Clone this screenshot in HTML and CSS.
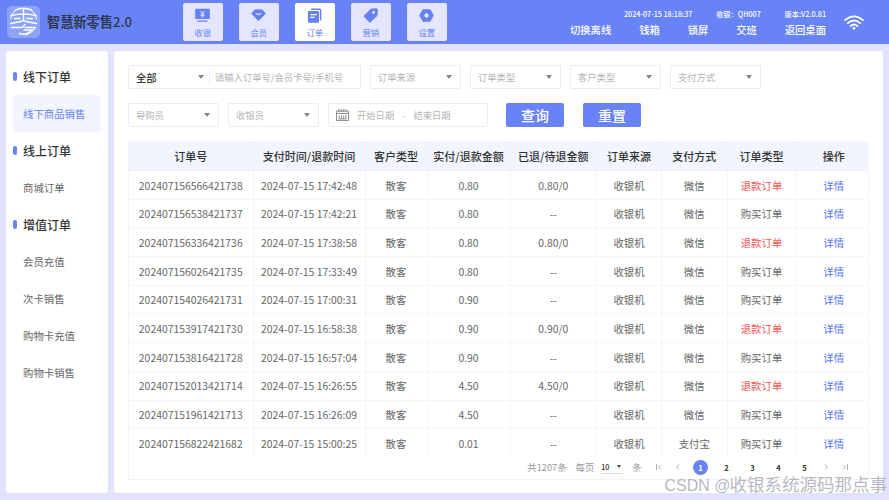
FILE: index.html
```html
<!DOCTYPE html>
<html lang="zh-CN">
<head>
    <meta charset="UTF-8">
    <meta name="viewport" content="width=device-width, initial-scale=1.0">
    <title>智慧新零售2.0</title>
    <link rel="stylesheet" href="styles.css">
</head>
<body>
    <header class="header">
        <svg class="logo" viewBox="0 0 33 32">
            <rect width="33" height="32" rx="5" fill="#8ea4f8"/>
            <g fill="none" stroke="#fff" stroke-width="1.4" stroke-linecap="round">
                <path d="M8.500 4Q16.500 .5 24.500 4M4 9.500Q16.500 6.500 29 9.500M16.500 2.500V14M7.500 12.500H13M20 12.500H25.500M3.500 17.500L14 15.500Q16.500 14 19 15.500L29.500 17.500M4.500 21.500H15L18 18.500M18 21.500H28.500M12.500 27.500Q18 29.500 22.500 26L25 24H17"/>
                <path d="M8.500 4A14 14 0 0 0 3.500 13M24.500 4A14 14 0 0 1 29.500 13M28.500 21.500Q25 28 18 29" stroke-width="1"/>
            </g>
        </svg>
        <h1 class="title">智慧新零售<span>2.0</span></h1>

        <nav class="nav">
            <a class="nav-item">
                <svg viewBox="0 0 16 16"><path fill="#6681f4" d="M1 .8h14a.8.8 0 0 1 .8.8v9.400a.8.8 0 0 1-.8.8H1a.8.8 0 0 1-.8-.8V1.600a.8.8 0 0 1 .8-.8zM2.500 13.300h11v1.400h-11z"/><path d="M5.800 3l2.200 2.500 2.200-2.500M8 5.500v4.800M5.800 6.200h4.400M5.800 8.200h4.400" fill="none" stroke="#e3e6fe"/></svg>
                <span>收银</span>
            </a>
            <a class="nav-item">
                <svg viewBox="0 0 16 16"><path fill="#6681f4" stroke="#6681f4" stroke-linejoin="round" d="M4 2h8l3.300 4L8 13.500.7 6z"/><path d="M5.500 6Q8 8 10.500 6" fill="none" stroke="#e3e6fe" stroke-width="1.300" stroke-linecap="round"/></svg>
                <span>会员</span>
            </a>
            <a class="nav-item active">
                <svg viewBox="0 0 16 16"><path d="M4.500 1.200h9a1 1 0 0 1 1 1v11" fill="none" stroke="#6681f4" stroke-width="1.600"/><rect x="1" y="3.300" width="11.800" height="12.300" rx="1.300" fill="#6681f4"/><path d="M3.500 7h7M3.500 10h4.500" stroke="#fff" stroke-width="1.400"/></svg>
                <span>订单</span>
            </a>
            <a class="nav-item">
                <svg viewBox="0 0 16 16"><path fill="#6681f4" stroke="#6681f4" stroke-width="1.300" stroke-linejoin="round" d="M8.500 1.500l5.500-.7 1.200 1.200-.5 6L7.300 15 1.300 8.700z"/><circle cx="11.300" cy="4.700" r="1.500" fill="#e3e6fe"/></svg>
                <span>营销</span>
            </a>
            <a class="nav-item">
                <svg viewBox="0 0 16 16"><path fill="#6681f4" stroke="#6681f4" stroke-width="1.500" stroke-linejoin="round" d="M4.500 2h7l3.500 6-3.500 6h-7L1 8z"/><circle cx="8" cy="8" r="2.300" fill="#e3e6fe"/></svg>
                <span>设置</span>
            </a>
        </nav>

        <div class="status">
            <div class="status-info">
                <span>2024-07-15 18:18:37</span>
                <span>收银：QH007</span>
                <span>版本:V2.0.81</span>
            </div>
            <div class="status-links">
                <a>切换离线</a>
                <a>钱箱</a>
                <a>锁屏</a>
                <a>交班</a>
                <a>返回桌面</a>
            </div>
        </div>
        <svg class="wifi" viewBox="0 0 20 15">
            <g fill="none" stroke="#fff" stroke-width="1.700" stroke-linecap="round">
                <path d="M1 5.200Q10-2.600 19 5.200M3.800 8.200Q10 2.800 16.200 8.200M6.600 11Q10 8 13.400 11"/>
            </g>
            <circle cx="10" cy="13.300" r="1.400" fill="#fff"/>
        </svg>
    </header>

    <div class="layout">
        <aside class="sidebar">
            <div class="side-title">线下订单</div>
            <a class="side-item active">线下商品销售</a>
            <div class="side-title">线上订单</div>
            <a class="side-item">商城订单</a>
            <div class="side-title">增值订单</div>
            <a class="side-item">会员充值</a>
            <a class="side-item">次卡销售</a>
            <a class="side-item">购物卡充值</a>
            <a class="side-item">购物卡销售</a>
        </aside>

        <main class="main">
            <div class="filters">
                <div class="search">
                    <div class="search-type">全部<i class="caret"></i></div>
                    <div class="search-text">请输入订单号/会员卡号/手机号</div>
                </div>
                <div class="select">订单来源<i class="caret"></i></div>
                <div class="select">订单类型<i class="caret"></i></div>
                <div class="select">客户类型<i class="caret"></i></div>
                <div class="select">支付方式<i class="caret"></i></div>
            </div>
            <div class="filters">
                <div class="select">导购员<i class="caret"></i></div>
                <div class="select">收银员<i class="caret"></i></div>
                <div class="date-range">
                    <svg viewBox="0 0 13 12"><path d="M.5 2h12v9.500H.5zM.5 4.500h12M3 0v3M5.300 0v3M7.700 0v3M10 0v3M3.200 6.500v3.500M5.400 6v4M7.600 6.500v3.500M9.800 6v4M2.500 10h8" fill="none" stroke="#858585" stroke-width=".9"/></svg>
                    <span>开始日期</span><span>-</span><span>结束日期</span>
                </div>
                <button class="btn btn-query">查询</button>
                <button class="btn">重置</button>
            </div>

            <div class="table-box">
                <table class="table">
                    <colgroup>
                        <col class="c-no"><col class="c-time"><col class="c-customer"><col class="c-paid"><col class="c-back"><col class="c-source"><col class="c-pay"><col class="c-type"><col class="c-op">
                    </colgroup>
                    <thead>
                        <tr><th>订单号</th><th>支付时间/退款时间</th><th>客户类型</th><th>实付/退款金额</th><th>已退/待退金额</th><th>订单来源</th><th>支付方式</th><th>订单类型</th><th>操作</th></tr>
                    </thead>
                    <tbody>
                        <tr><td>202407156566421738</td><td>2024-07-15 17:42:48</td><td>散客</td><td>0.80</td><td>0.80/0</td><td>收银机</td><td>微信</td><td class="refund">退款订单</td><td class="link">详情</td></tr>
                        <tr><td>202407156538421737</td><td>2024-07-15 17:42:21</td><td>散客</td><td>0.80</td><td>--</td><td>收银机</td><td>微信</td><td>购买订单</td><td class="link">详情</td></tr>
                        <tr><td>202407156336421736</td><td>2024-07-15 17:38:58</td><td>散客</td><td>0.80</td><td>0.80/0</td><td>收银机</td><td>微信</td><td class="refund">退款订单</td><td class="link">详情</td></tr>
                        <tr><td>202407156026421735</td><td>2024-07-15 17:33:49</td><td>散客</td><td>0.80</td><td>--</td><td>收银机</td><td>微信</td><td>购买订单</td><td class="link">详情</td></tr>
                        <tr><td>202407154026421731</td><td>2024-07-15 17:00:31</td><td>散客</td><td>0.90</td><td>--</td><td>收银机</td><td>微信</td><td>购买订单</td><td class="link">详情</td></tr>
                        <tr><td>202407153917421730</td><td>2024-07-15 16:58:38</td><td>散客</td><td>0.90</td><td>0.90/0</td><td>收银机</td><td>微信</td><td class="refund">退款订单</td><td class="link">详情</td></tr>
                        <tr><td>202407153816421728</td><td>2024-07-15 16:57:04</td><td>散客</td><td>0.90</td><td>--</td><td>收银机</td><td>微信</td><td>购买订单</td><td class="link">详情</td></tr>
                        <tr><td>202407152013421714</td><td>2024-07-15 16:26:55</td><td>散客</td><td>4.50</td><td>4.50/0</td><td>收银机</td><td>微信</td><td class="refund">退款订单</td><td class="link">详情</td></tr>
                        <tr><td>202407151961421713</td><td>2024-07-15 16:26:09</td><td>散客</td><td>4.50</td><td>--</td><td>收银机</td><td>微信</td><td>购买订单</td><td class="link">详情</td></tr>
                        <tr><td>202407156822421682</td><td>2024-07-15 15:00:25</td><td>散客</td><td>0.01</td><td>--</td><td>收银机</td><td>支付宝</td><td>购买订单</td><td class="link">详情</td></tr>
                    </tbody>
                </table>

                <div class="pager">
                    <span class="total">共1207条</span>
                    <span>每页</span>
                    <span class="page-size">10<i class="caret"></i></span>
                    <span class="unit">条</span>
                    <svg class="arrow" viewBox="0 0 8 8"><path d="M1.500 1v6M6 1.500L3.500 4 6 6.500"/></svg>
                    <svg class="arrow" viewBox="0 0 8 8"><path d="M5 1.500L2.500 4 5 6.500"/></svg>
                    <div class="pages">
                        <b class="current">1</b><b>2</b><b>3</b><b>4</b><b>5</b>
                    </div>
                    <svg class="arrow" viewBox="0 0 8 8"><path d="M3 1.500L5.500 4 3 6.500"/></svg>
                    <svg class="arrow" viewBox="0 0 8 8"><path d="M6.500 1v6M2 1.500L4.500 4 2 6.500"/></svg>
                </div>
            </div>
        </main>
    </div>

    <div class="watermark"><span>CSDN @</span>收银系统源码那点事</div>
</body>
</html>
```
FILE: styles.css
```css
* {
    box-sizing: border-box;
}
body {
    margin: 0;
    width: 889px;
    height: 500px;
    overflow: hidden;
    position: relative;
    background: #e1e2fe;
    color: #666;
    font-family: "Noto Sans CJK SC", sans-serif;
    font-size: 10.4px;
}

/* header */
.header {
    height: 44px;
    background: #6783f5;
    display: flex;
    align-items: center;
    color: #fff;
}
.logo {
    width: 33px;
    height: 32px;
    margin-left: 7px;
}
.title {
    width: 135.5px;
    margin: 0 0 0 7px;
    font-size: 13.2px;
    font-weight: 700;
    line-height: 20px;
    color: #30384f;
    white-space: nowrap;
}
.title span {
    font-weight: 500;
}
.nav {
    display: flex;
    gap: 15.5px;
}
.nav-item {
    width: 40.5px;
    height: 38px;
    padding-top: 5px;
    border-radius: 2px;
    background: #e3e6fe;
    color: #6681f4;
    font-size: 8.3px;
    line-height: 12px;
    display: flex;
    flex-direction: column;
    align-items: center;
    gap: 3px;
}
.nav-item.active {
    background: #fff;
}
.nav-item svg {
    width: 15px;
    height: 15px;
}
.status {
    width: 256px;
    margin-left: 123px;
    padding-top: 2px;
    font-weight: 500;
}
.status-info {
    display: flex;
    justify-content: space-between;
    padding-left: 54px;
    font-size: 7.2px;
    line-height: 12px;
}
.status-links {
    display: flex;
    justify-content: space-between;
    margin-top: 2px;
    font-size: 10.3px;
    line-height: 16px;
}
.wifi {
    width: 20px;
    height: 15px;
    margin-left: 18px;
}

/* sidebar */
.layout {
    display: flex;
    gap: 6px;
    padding: 7px 6px;
}
.sidebar {
    width: 102px;
    height: 442px;
    padding: 7px 7px 0;
    border-radius: 3px;
    background: #fff;
}
.side-title,
.side-item {
    height: 37px;
    padding-left: 10px;
    display: flex;
    align-items: center;
}
.side-title {
    padding-left: 0;
    gap: 6px;
    font-size: 12px;
    font-weight: 500;
    color: #333;
}
.side-title::before {
    content: "";
    width: 4px;
    height: 9px;
    border-radius: 2px;
    background: #6783f5;
}
.side-item.active {
    background: #f2f4fe;
    color: #6681f4;
    border-radius: 4px;
}

/* filters */
.main {
    width: 769px;
    height: 442px;
    padding: 14px 14px 0;
    border-radius: 3px;
    background: #fff;
}
.filters {
    display: flex;
    gap: 9px;
    margin-bottom: 14px;
    font-size: 9.3px;
    color: #b5b5b5;
}
.select,
.search,
.date-range {
    height: 24px;
    border: 1px solid #ececec;
    border-radius: 2px;
    display: flex;
    align-items: center;
}
.select {
    width: 91px;
    padding: 0 8px 0 7px;
    justify-content: space-between;
}
.search {
    width: 233px;
}
.search-type {
    width: 81px;
    padding: 0 5px 0 7px;
    border-right: 1px solid #f0f0f0;
    display: flex;
    align-items: center;
    justify-content: space-between;
    font-size: 10.3px;
    font-weight: 500;
    color: #333;
}
.search-text {
    padding-left: 5px;
}
.caret {
    border: 3.5px solid transparent;
    border-top: 4px solid #888;
    border-bottom: 0;
}
.date-range {
    width: 160px;
    padding-left: 7px;
    gap: 8px;
}
.date-range svg {
    width: 13px;
    height: 12px;
}
.btn {
    width: 58px;
    height: 24px;
    margin-left: 10px;
    padding: 0;
    border: 0;
    border-radius: 2px;
    background: #6783f5;
    color: #fff;
    font-family: inherit;
    font-size: 14px;
    font-weight: 500;
    line-height: 24px;
}
.btn-query {
    margin-left: 9px;
}

/* order table */
.table-box {
    width: 741px;
    height: 339px;
    border: 1px solid #f3f3f5;
    border-top: 0;
}
.table {
    width: 740px;
    table-layout: fixed;
    border-collapse: separate;
    border-spacing: 0;
    text-align: center;
}
.c-no { width: 124.5px; }
.c-time { width: 112px; }
.c-customer { width: 62px; }
.c-paid { width: 83px; }
.c-back { width: 86.5px; }
.c-source { width: 65px; }
.c-pay { width: 65.5px; }
.c-type { width: 69px; }
.c-op { width: 72.5px; }
.table th,
.table td {
    height: 28.7px;
    padding: 1.5px 0 0;
    border-right: 1px solid #f5f5f7;
    border-bottom: 1px solid #f5f5f7;
    line-height: 16px;
    white-space: nowrap;
}
.table th {
    height: 30px;
    background: #f2f4fe;
    border-color: #eef0fa;
    color: #333;
    font-size: 11px;
    font-weight: 500;
}
.table tr > :last-child {
    padding-left: 2px;
    border-right: 0;
}
.table tbody tr:last-child td {
    height: 27px;
    padding-top: 3px;
    border-bottom: 0;
}
.table .refund {
    color: #fa5555;
}
.table .link {
    color: #5674f3;
}

/* pagination */
.pager {
    height: 22px;
    padding-right: 14px;
    display: flex;
    align-items: center;
    justify-content: flex-end;
    font-size: 9.3px;
    color: #999;
}
.total {
    margin-right: 9px;
}
.page-size {
    width: 22px;
    height: 14px;
    margin: 0 9px 0 7px;
    border-bottom: 1px solid #ddd;
    display: flex;
    align-items: center;
    justify-content: space-between;
    font-size: 7.2px;
    font-weight: 500;
    color: #333;
}
.page-size .caret {
    margin-right: 2px;
    border-width: 3px 2px 0;
    border-top-color: #444;
}
.unit {
    margin-right: 7.5px;
}
.arrow {
    width: 8px;
    height: 8px;
    margin: 0 5.5px;
    fill: none;
    stroke: #999;
    stroke-width: 0.8;
}
.pages {
    display: flex;
    gap: 11px;
    margin: 0 4px 0 6px;
}
.pages b {
    width: 15px;
    height: 15px;
    border-radius: 50%;
    font-size: 7.5px;
    line-height: 15px;
    text-align: center;
    color: #333;
}
.pages .current {
    background: #6783f5;
    color: #fff;
}

.watermark {
    position: absolute;
    right: 2px;
    bottom: 5px;
    font-size: 17.5px;
    line-height: 18px;
    color: rgba(160, 160, 168, 0.75);
    white-space: nowrap;
}
.watermark span {
    margin-right: -1px;
    font-family: "Liberation Sans", Arial, sans-serif;
    font-size: 16px;
}
```
